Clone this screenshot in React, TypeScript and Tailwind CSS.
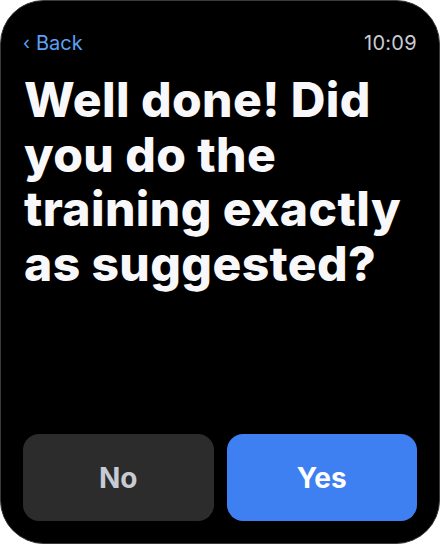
import React from "react";

function App() {
  return (
    <div className="w-[440px] h-[544px] bg-white">
      <div
        className="w-full h-full rounded-[44px] bg-black border border-[#3a3a3a] flex flex-col px-[22px] pt-[29px] pb-[22px]"
        style={{ fontFamily: "Inter, 'Noto Sans', sans-serif" }}
      >
        <div className="flex items-center justify-between h-[26px]">
          <button className="text-[20px] text-[#5aa2f5] leading-none flex items-center gap-[6px]">
            <span className="text-[18px]">‹</span>
            <span>Back</span>
          </button>
          <span className="text-[20px] text-[#c9ccd3] leading-none tracking-[0.3px]">10:09</span>
        </div>
        <h1 className="mt-[17px] text-[48px] leading-[54.5px] font-extrabold text-[#f8f8fa] tracking-[0.4px] pl-[1px]">
          Well done! Did you do the training exactly as suggested?
        </h1>
        <div className="mt-auto grid grid-cols-2 gap-[13px]">
          <button className="h-[87px] rounded-[16px] bg-[#2c2c2c] text-[#c7cbd3] text-[28px] font-bold">
            No
          </button>
          <button className="h-[87px] rounded-[16px] bg-[#3e7ff2] text-white text-[28px] font-bold">
            Yes
          </button>
        </div>
      </div>
    </div>
  );
}

export default App;
